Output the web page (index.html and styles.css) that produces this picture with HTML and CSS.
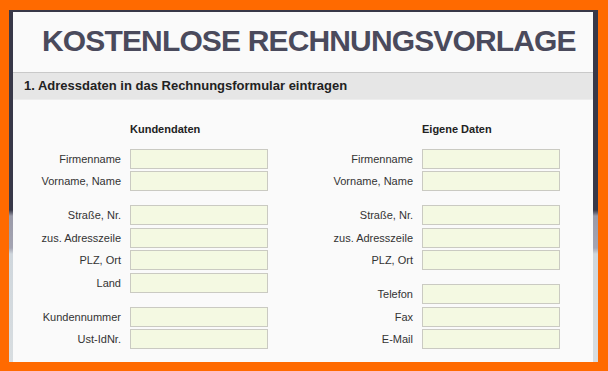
FILE: index.html
```html
<!DOCTYPE html>
<html>
<head>
    <title>Kostenlose Rechnungsvorlage</title>
    <link rel="stylesheet" href="styles.css">
</head>
<body>
    <div id="window">
        <div id="panel">
            <h1 id="title">KOSTENLOSE RECHNUNGSVORLAGE</h1>
            <div class="section-bar">1. Adressdaten in das Rechnungsformular eintragen</div>

            <form id="address-form">
                <div class="column">
                    <div class="row head">
                        <span class="label"></span>
                        <span class="col-title">Kundendaten</span>
                    </div>
                    <div class="row"><label class="label" for="k-firma">Firmenname</label><input type="text" id="k-firma"></div>
                    <div class="row"><label class="label" for="k-name">Vorname, Name</label><input type="text" id="k-name"></div>
                    <div class="row sep"><label class="label" for="k-strasse">Straße, Nr.</label><input type="text" id="k-strasse"></div>
                    <div class="row"><label class="label" for="k-zusatz">zus. Adresszeile</label><input type="text" id="k-zusatz"></div>
                    <div class="row"><label class="label" for="k-plz">PLZ, Ort</label><input type="text" id="k-plz"></div>
                    <div class="row"><label class="label" for="k-land">Land</label><input type="text" id="k-land"></div>
                    <div class="row sep"><label class="label" for="k-nummer">Kundennummer</label><input type="text" id="k-nummer"></div>
                    <div class="row"><label class="label" for="k-ust">Ust-IdNr.</label><input type="text" id="k-ust"></div>
                </div>

                <div class="column">
                    <div class="row head">
                        <span class="label"></span>
                        <span class="col-title">Eigene Daten</span>
                    </div>
                    <div class="row"><label class="label" for="e-firma">Firmenname</label><input type="text" id="e-firma"></div>
                    <div class="row"><label class="label" for="e-name">Vorname, Name</label><input type="text" id="e-name"></div>
                    <div class="row sep"><label class="label" for="e-strasse">Straße, Nr.</label><input type="text" id="e-strasse"></div>
                    <div class="row"><label class="label" for="e-zusatz">zus. Adresszeile</label><input type="text" id="e-zusatz"></div>
                    <div class="row"><label class="label" for="e-plz">PLZ, Ort</label><input type="text" id="e-plz"></div>
                    <div class="row sep"><label class="label" for="e-tel">Telefon</label><input type="text" id="e-tel"></div>
                    <div class="row"><label class="label" for="e-fax">Fax</label><input type="text" id="e-fax"></div>
                    <div class="row"><label class="label" for="e-mail">E-Mail</label><input type="text" id="e-mail"></div>
                </div>
            </form>
        </div>
    </div>
</body>
</html>
```

FILE: styles.css
```css
body {
    margin: 0;
    background-color: #ff6a00;
    font-family: "Liberation Sans", Arial, sans-serif;
    overflow: hidden;
}

#window {
    margin: 10px 10px 0 9px;
    height: 352px;
    padding: 2px 5px 0 4px;
    box-sizing: border-box;
    background: linear-gradient(to bottom, #383848 0, #383848 200px, #9a9aa8 206px, #a4a4b2 238px, #cfd6dc 244px, #d8dde0 100%);
}

#panel {
    height: 100%;
    background-color: #fafafa;
}

#title {
    margin: 0;
    height: 60px;
    padding-left: 29px;
    line-height: 58px;
    font-size: 30px;
    letter-spacing: -0.85px;
    font-weight: bold;
    color: #4a4a5c;
}

.section-bar {
    height: 26px;
    line-height: 26px;
    padding-left: 11px;
    border-top: 1px solid #c9c9c9;
    border-bottom: 1px solid #ededed;
    background-color: #e6e6e6;
    font-size: 13px;
    font-weight: bold;
    color: #222;
}

#address-form {
    display: flex;
    gap: 37px;
    padding-top: 20px;
}

.column {
    display: flex;
    flex-direction: column;
}

.row {
    display: flex;
    align-items: center;
    gap: 9px;
    height: 20px;
    margin-top: 2.5px;
}

.row.head {
    height: 18px;
    margin-top: 0;
    margin-bottom: 8px;
}

.row.sep {
    margin-top: 14px;
}

.label {
    width: 108px;
    text-align: right;
    font-size: 11px;
    color: #333;
}

.col-title {
    font-size: 11px;
    font-weight: bold;
    color: #222;
}

input {
    width: 138px;
    height: 20px;
    box-sizing: border-box;
    margin: 0;
    padding: 0 3px;
    border: 1px solid #cacac2;
    background-color: #f4f9e2;
    font-size: 11px;
}
```
